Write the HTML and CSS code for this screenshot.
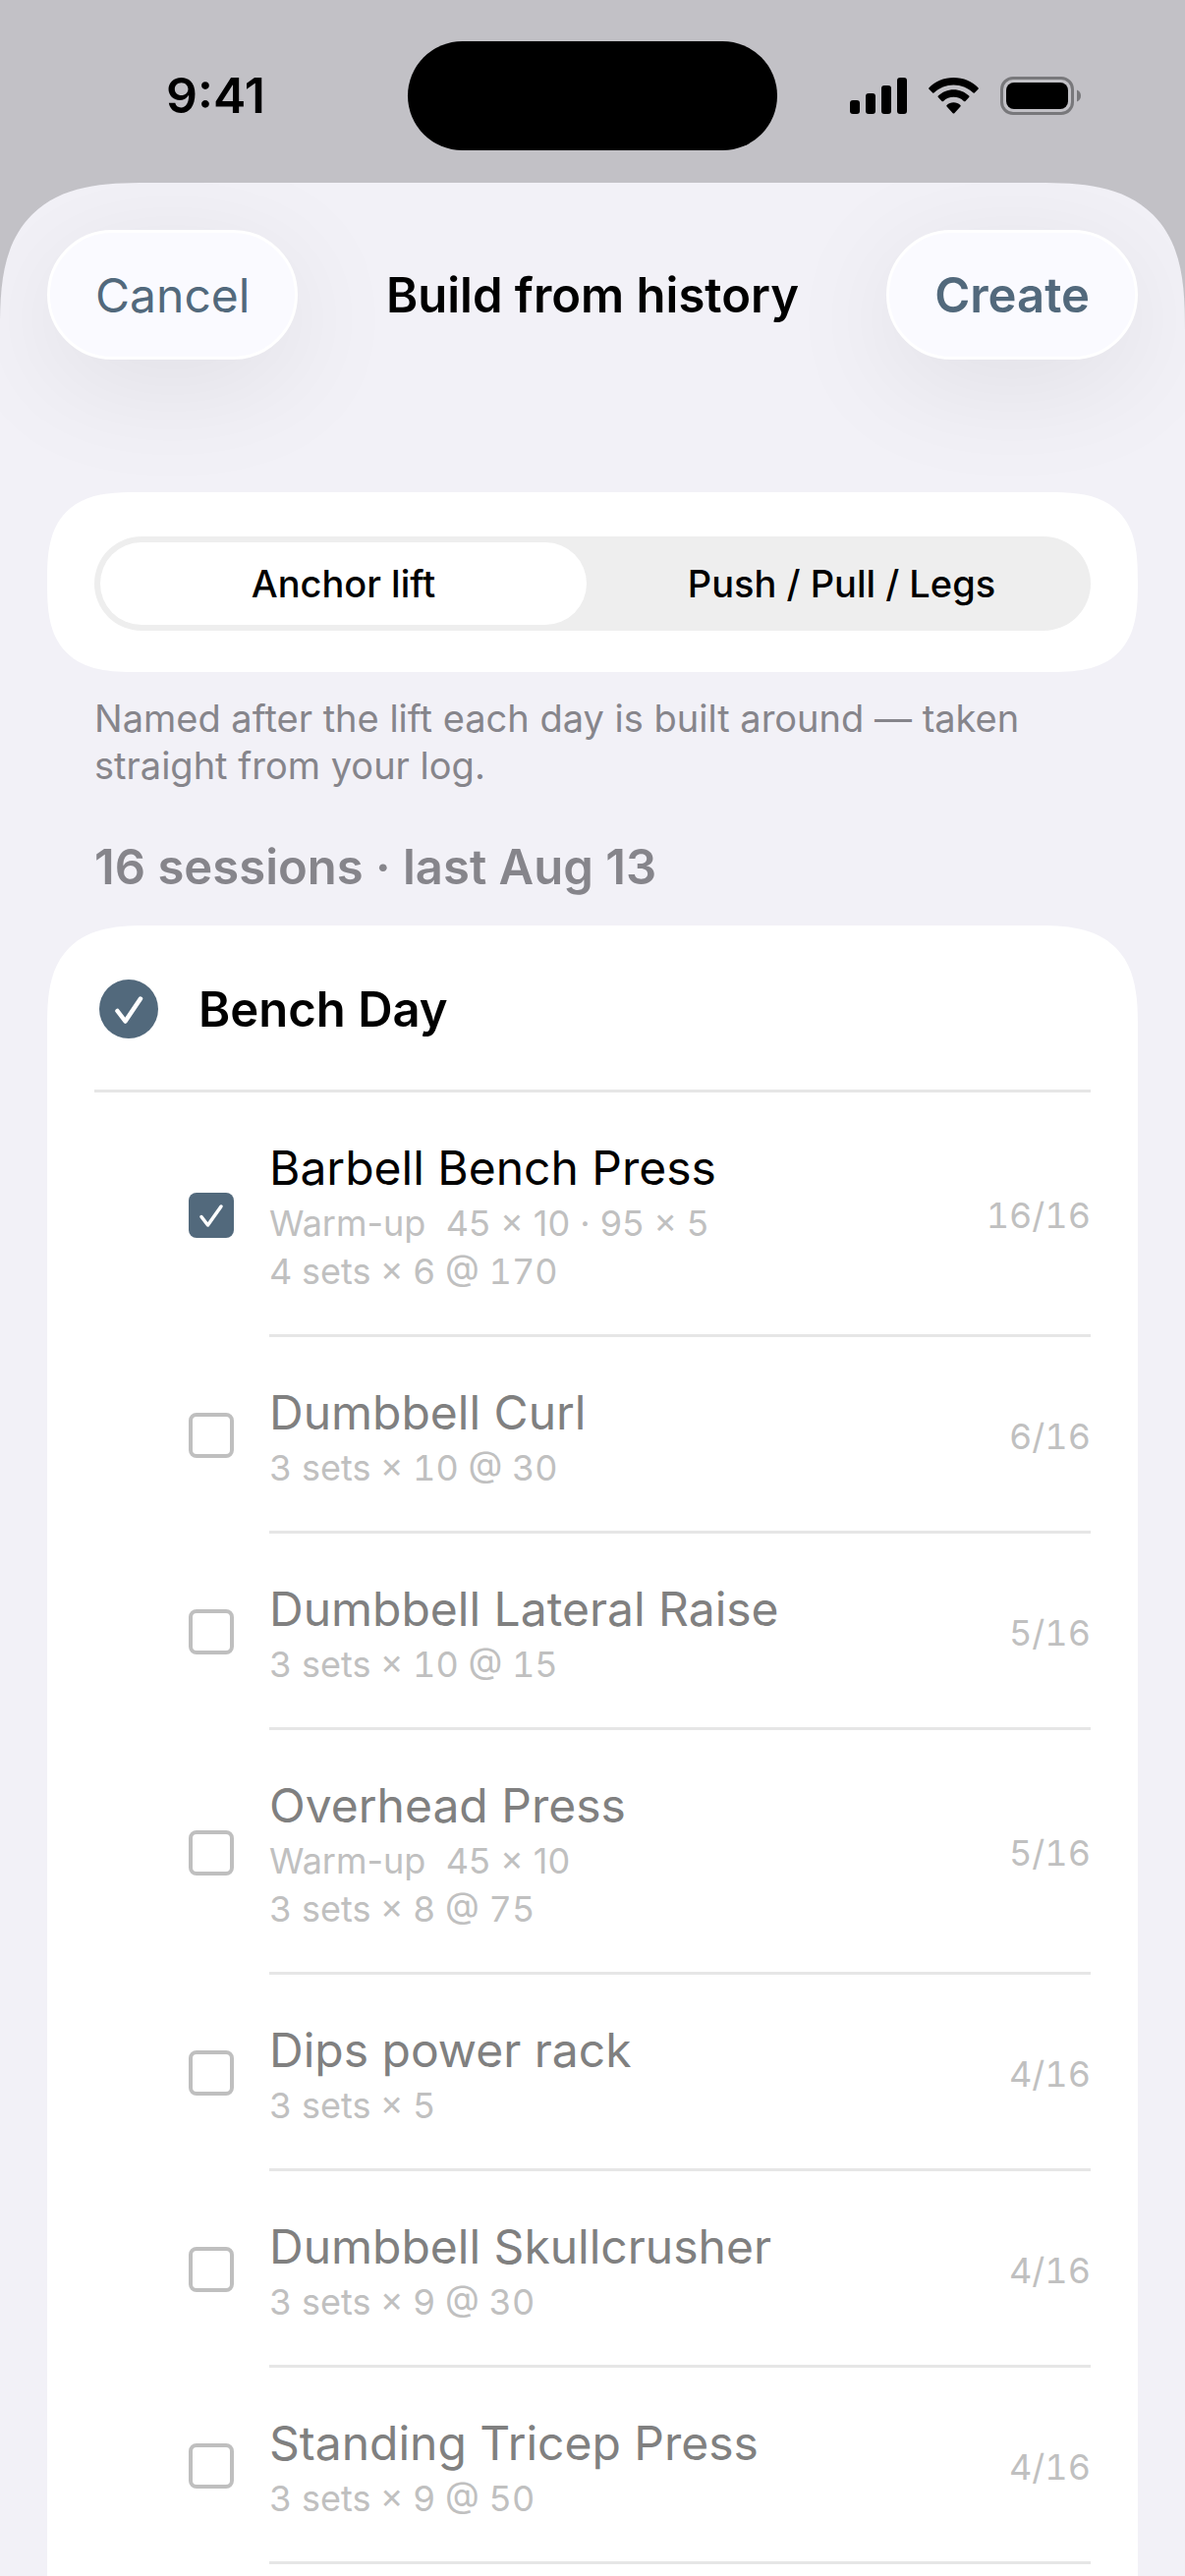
FILE: index.html
```html
<!DOCTYPE html>
<html lang="en">
<head>
    <meta charset="UTF-8">
    <meta name="viewport" content="width=device-width, initial-scale=1.0">
    <title>Build from history</title>
    <link rel="stylesheet" href="styles.css">
</head>
<body>

    <div class="status-bar">
        <span class="time">9:41</span>
        <div class="island"></div>
        <div class="status-icons">
            <svg width="58" height="37" viewBox="0 0 58 37">
                <rect x="0" y="23" width="10" height="14" rx="3"/>
                <rect x="16" y="16" width="10" height="21" rx="3"/>
                <rect x="32" y="8" width="10" height="29" rx="3"/>
                <rect x="48" y="0" width="10" height="37" rx="3"/>
            </svg>
            <svg width="51" height="37" viewBox="0 0 51 37">
                <path d="M25.500 0C35.500 0 44.500 4 50.500 10.200Q51.200 11 50.500 11.800L46.800 15.400Q46 16 45.200 15.300C40 10.300 33 7.500 25.500 7.500S11 10.300 5.800 15.300Q5 16 4.200 15.400L.5 11.800Q-.2 11 .5 10.200C6.500 4 15.500 0 25.500 0Z"/>
                <path d="M25.500 12.200C31.500 12.200 37 14.500 41.200 18.500Q42 19.300 41.200 20.100L37.500 23.900Q36.700 24.600 35.900 23.900C33 21.300 29.500 19.800 25.500 19.800S18 21.300 15.100 23.900Q14.300 24.600 13.500 23.900L9.800 20.100Q9 19.300 9.800 18.500C14 14.500 19.500 12.200 25.500 12.200Z"/>
                <path d="M25.500 25.200C28.200 25.200 30.600 26.200 32.400 27.900Q33.200 28.600 32.400 29.500L26.300 36.200Q25.500 37 24.700 36.200L18.600 29.500Q17.800 28.600 18.600 27.900C20.400 26.200 22.800 25.200 25.500 25.200Z"/>
            </svg>
            <svg width="82" height="39" viewBox="0 0 82 39">
                <rect class="battery-case" x="1.500" y="1.500" width="72" height="36" rx="11.500"/>
                <rect x="6" y="6" width="63" height="27" rx="8"/>
                <path class="battery-tip" d="M78 13.500C80.500 14.500 82 16.800 82 19.500S80.500 24.500 78 25.500Z"/>
            </svg>
        </div>
    </div>

    <main class="sheet">
        <header class="toolbar">
            <button type="button" class="toolbar-btn">Cancel</button>
            <h1>Build from history</h1>
            <button type="button" class="toolbar-btn create-btn">Create</button>
        </header>

        <section class="card naming">
            <div class="segmented">
                <label><input type="radio" name="naming" checked><span>Anchor lift</span></label>
                <label><input type="radio" name="naming"><span>Push / Pull / Legs</span></label>
            </div>
        </section>
        <p class="note">Named after the lift each day is built around — taken straight from your log.</p>

        <h2>16 sessions · last Aug 13</h2>

        <section class="card day">
            <label class="day-header">
                <input type="checkbox" class="day-check" checked>
                <span>Bench Day</span>
            </label>

            <label class="exercise">
                <input type="checkbox" checked>
                <span class="row">
                    <span class="info">
                        <span class="name">Barbell Bench Press</span>
                        <span class="detail">Warm-up&nbsp; 45 × 10 · 95 × 5</span>
                        <span class="detail sets">4 sets × 6 @ 170</span>
                    </span>
                    <span class="count">16/16</span>
                </span>
            </label>
            <label class="exercise">
                <input type="checkbox">
                <span class="row">
                    <span class="info">
                        <span class="name">Dumbbell Curl</span>
                        <span class="detail sets">3 sets × 10 @ 30</span>
                    </span>
                    <span class="count">6/16</span>
                </span>
            </label>
            <label class="exercise">
                <input type="checkbox">
                <span class="row">
                    <span class="info">
                        <span class="name">Dumbbell Lateral Raise</span>
                        <span class="detail sets">3 sets × 10 @ 15</span>
                    </span>
                    <span class="count">5/16</span>
                </span>
            </label>
            <label class="exercise">
                <input type="checkbox">
                <span class="row">
                    <span class="info">
                        <span class="name">Overhead Press</span>
                        <span class="detail">Warm-up&nbsp; 45 × 10</span>
                        <span class="detail sets">3 sets × 8 @ 75</span>
                    </span>
                    <span class="count">5/16</span>
                </span>
            </label>
            <label class="exercise">
                <input type="checkbox">
                <span class="row">
                    <span class="info">
                        <span class="name">Dips power rack</span>
                        <span class="detail sets">3 sets × 5</span>
                    </span>
                    <span class="count">4/16</span>
                </span>
            </label>
            <label class="exercise">
                <input type="checkbox">
                <span class="row">
                    <span class="info">
                        <span class="name">Dumbbell Skullcrusher</span>
                        <span class="detail sets">3 sets × 9 @ 30</span>
                    </span>
                    <span class="count">4/16</span>
                </span>
            </label>
            <label class="exercise">
                <input type="checkbox">
                <span class="row">
                    <span class="info">
                        <span class="name">Standing Tricep Press</span>
                        <span class="detail sets">3 sets × 9 @ 50</span>
                    </span>
                    <span class="count">4/16</span>
                </span>
            </label>
        </section>
    </main>

</body>
</html>
```
FILE: styles.css
```css
* {
    box-sizing: border-box;
}

body {
    margin: 0;
    min-height: 100vh;
    display: flex;
    flex-direction: column;
    background-color: #c2c1c6;
    font-family: Inter, "Liberation Sans", sans-serif;
    color: #000000;
}

/* Status bar */
.status-bar {
    display: grid;
    grid-template-columns: 1fr auto 1fr;
    align-items: center;
    height: 186px;
    padding-top: 8px;
}

.time {
    justify-self: center;
    padding-left: 24px;
    font-size: 50px;
    font-weight: 600;
}

.island {
    width: 376px;
    height: 111px;
    border-radius: 56px;
    background-color: #000000;
}

.status-icons {
    display: flex;
    align-items: center;
    justify-content: center;
    gap: 22px;
    padding-right: 32px;
}

.battery-case {
    fill: none;
    stroke: #78787b;
    stroke-width: 3;
}

.battery-tip {
    fill: #78787b;
}

/* Sheet */
.sheet {
    flex: 1;
    display: flex;
    flex-direction: column;
    padding: 48px 48px 0;
    background-color: #f2f1f7;
    border-radius: 116px 116px 0 0;
    overflow: hidden;
}

.toolbar {
    display: grid;
    grid-template-columns: 1fr auto 1fr;
    align-items: center;
    margin-bottom: 135px;
}

.toolbar h1 {
    margin: 0;
    font-size: 49px;
    font-weight: 600;
}

.toolbar-btn {
    justify-self: start;
    height: 132px;
    padding: 0 46px;
    border: 3px solid #ffffff;
    border-radius: 66px;
    background-color: #fafaff;
    box-shadow: 0 24px 120px rgba(0, 0, 0, 0.08);
    color: #52697c;
    font-family: inherit;
    font-size: 48px;
    cursor: pointer;
}

.create-btn {
    justify-self: end;
    font-size: 49px;
    font-weight: 600;
}

.card {
    background-color: #ffffff;
    border-radius: 80px;
}

/* Naming switch */
.naming {
    padding: 45px 48px 42px;
}

.segmented {
    display: flex;
    gap: 12px;
    height: 96px;
    padding: 6px;
    border-radius: 48px;
    background-color: #eeeeee;
}

.segmented label {
    flex: 1;
    display: flex;
    cursor: pointer;
}

.segmented input {
    appearance: none;
    width: 0;
    margin: 0;
}

.segmented span {
    flex: 1;
    display: flex;
    align-items: center;
    justify-content: center;
    border-radius: 42px;
    font-size: 38px;
    font-weight: 500;
}

.segmented input:checked + span {
    background-color: #ffffff;
}

.note {
    margin: 23px 48px 0;
    color: #86858b;
    font-size: 38px;
    line-height: 48px;
}

h2 {
    margin: 48px 48px 27px;
    color: #86858b;
    font-size: 49px;
    font-weight: 600;
    line-height: 64px;
}

/* Day list */
.day {
    flex: 1;
    padding: 0 48px;
    border-radius: 80px 80px 0 0;
}

.day-header {
    display: flex;
    align-items: center;
    gap: 41px;
    height: 170px;
    border-bottom: 3px solid #e6e6e6;
    padding: 3px 5px 0;
    font-size: 49px;
    font-weight: 600;
}

.day input {
    appearance: none;
    flex-shrink: 0;
    margin: 0;
    background-repeat: no-repeat;
    background-position: center;
}

.day-check {
    width: 60px;
    height: 60px;
    border-radius: 50%;
    border: 4px solid #bfbfbf;
}

.day-check:checked {
    border: none;
    background-color: #52697c;
    background-image: url("data:image/svg+xml,%3Csvg xmlns='http://www.w3.org/2000/svg' width='60' height='60' fill='none' stroke='white' stroke-width='4.500' stroke-linecap='round' stroke-linejoin='round'%3E%3Cpath d='M18.500 32L26.500 42.500L42 19.500'/%3E%3C/svg%3E");
}

.exercise {
    display: flex;
    align-items: center;
    gap: 36px;
    padding-left: 96px;
    color: #808080;
}

.exercise input {
    width: 46px;
    height: 46px;
    border: 4px solid #bfbfbf;
    border-radius: 8px;
}

.exercise input:checked {
    border: none;
    background-color: #52697c;
    background-image: url("data:image/svg+xml,%3Csvg xmlns='http://www.w3.org/2000/svg' width='46' height='46' fill='none' stroke='white' stroke-width='3.500' stroke-linecap='round' stroke-linejoin='round'%3E%3Cpath d='M13 24.500L19.500 33L33 14'/%3E%3C/svg%3E");
}

.exercise:has(input:checked) {
    color: #000000;
}

.row {
    flex: 1;
    display: flex;
    align-items: center;
    justify-content: space-between;
    padding: 44px 0 39px;
    border-bottom: 3px solid #e6e6e6;
}

.info {
    display: flex;
    flex-direction: column;
}

.name {
    font-size: 48px;
    line-height: 65px;
}

.detail,
.count {
    color: #c0c0c0;
    font-size: 36px;
    line-height: 49px;
}

.sets,
.count {
    font-variant-numeric: tabular-nums;
}

/* Smoother corners where the browser can draw them */
@supports (corner-shape: superellipse(1.5)) {
    .sheet {
        border-radius: 150px 150px 0 0;
        corner-shape: superellipse(1.5);
    }

    .card {
        border-radius: 91px;
        corner-shape: superellipse(1.5);
    }

    .day {
        border-radius: 104px 104px 0 0;
    }
}
```
